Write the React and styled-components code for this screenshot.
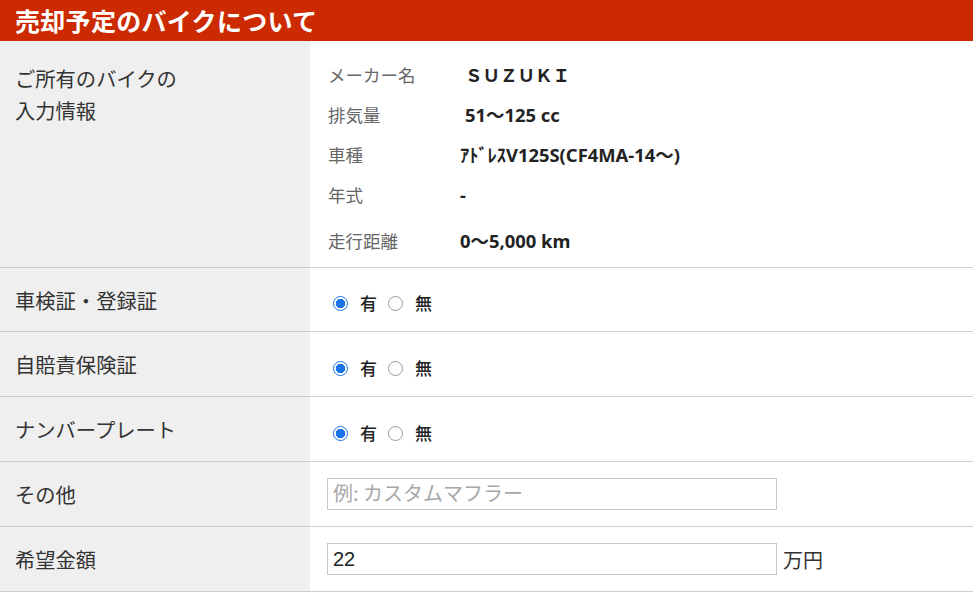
import React from "react";
import styled, { createGlobalStyle } from "styled-components";

const Global = createGlobalStyle`
  html, body { margin: 0; padding: 0; background: #fff; }
  body { font-family: "Noto Sans", "Noto Sans CJK JP", sans-serif; color: #333; }
  * { box-sizing: border-box; }
`;

const Page = styled.div`
  width: 973px;
`;

const Header = styled.h2`
  margin: 0;
  height: 41px;
  padding-left: 15px;
  background: #cc2a00;
  color: #fff;
  font-family: "Noto Sans CJK JP", sans-serif;
  font-size: 25px;
  font-weight: 700;
  line-height: 41px;
  letter-spacing: 0.3px;
`;

const Row = styled.div`
  display: grid;
  grid-template-columns: 310px 1fr;
  height: ${(p) => p.$h}px;
  border-bottom: 1px solid #cfcfcf;
`;

const Label = styled.div`
  background: #efefef;
  padding: ${(p) => (p.$top ? "21px 0 0 15px" : "0 0 0 15px")};
  display: flex;
  align-items: ${(p) => (p.$top ? "flex-start" : "center")};
  font-family: "Noto Sans CJK JP", sans-serif;
  font-size: 20.3px;
  line-height: 32px;
  color: #333;
`;

const Cell = styled.div`
  display: flex;
  align-items: center;
  padding-left: ${(p) => p.$pl ?? 18}px;
`;

const Specs = styled.div`
  padding: 13px 0 0 18px;
  display: flex;
  flex-direction: column;
`;

const Spec = styled.div`
  display: grid;
  grid-template-columns: 132px 1fr;
  align-items: center;
  height: ${(p) => p.$h || 40}px;
`;

const SpecKey = styled.span`
  font-family: "Noto Sans CJK JP", sans-serif;
  font-size: 17.5px;
  color: #666;
`;

const SpecVal = styled.span`
  font-family: "Noto Sans", "Noto Sans CJK JP", sans-serif;
  font-size: ${(p) => p.$fs || 18.4}px;
  font-weight: 700;
  color: #222;
  padding-left: ${(p) => p.$indent || 0}px;
`;

const RadioGroup = styled.div`
  display: flex;
  align-items: center;
  padding-left: 5px;
  padding-top: 6px;
`;

const RadioLabel = styled.label`
  display: flex;
  align-items: center;
  margin-right: 11px;
  font-family: "Noto Sans CJK JP", sans-serif;
  font-size: 17px;
  font-weight: 500;
  line-height: 17px;
  color: #222;
`;

const RadioInput = styled.input.attrs({ type: "radio" })`
  appearance: none;
  flex: none;
  width: 15px;
  height: 15px;
  margin: 2px 12px 0 0;
  border-radius: 50%;
  border: 1px solid #9a9a9a;
  background: #fff;
  &:checked {
    border: 1.5px solid #1a73e8;
    background: radial-gradient(circle, #1a73e8 0 4.5px, #fff 4.7px);
  }
`;

const TextInput = styled.input`
  width: 450px;
  height: 32px;
  border: 1px solid #c8c8c8;
  padding: 0 5px;
  font-family: "Liberation Sans", "Noto Sans CJK JP", sans-serif;
  font-size: 20px;
  color: #222;
  outline: none;
  &::placeholder {
    color: #a8a8a8;
    font-family: "Noto Sans CJK JP", sans-serif;
  }
`;

const Unit = styled.span`
  margin-left: 6px;
  font-family: "Noto Sans CJK JP", sans-serif;
  font-size: 20px;
  color: #333;
`;

const specs = [
  { k: "メーカー名", v: "ＳＵＺＵＫＩ", indent: 5, fs: 17.5 },
  { k: "排気量", v: "51～125 cc", indent: 5 },
  { k: "車種", v: "ｱﾄﾞﾚｽV125S(CF4MA-14～)" },
  { k: "年式", v: "-" },
  { k: "走行距離", v: "0～5,000 km", h: 52 },
];

function YesNo({ name }) {
  return (
    <RadioGroup>
      <RadioLabel>
        <RadioInput name={name} defaultChecked />
        有
      </RadioLabel>
      <RadioLabel>
        <RadioInput name={name} />
        無
      </RadioLabel>
    </RadioGroup>
  );
}

export default function App() {
  return (
    <Page>
      <Global />
      <Header>売却予定のバイクについて</Header>
      <Row $h={227}>
        <Label $top>
          ご所有のバイクの
          <br />
          入力情報
        </Label>
        <Specs>
          {specs.map((s) => (
            <Spec key={s.k} $h={s.h}>
              <SpecKey>{s.k}</SpecKey>
              <SpecVal $indent={s.indent} $fs={s.fs}>
                {s.v}
              </SpecVal>
            </Spec>
          ))}
        </Specs>
      </Row>
      <Row $h={64}>
        <Label>車検証・登録証</Label>
        <Cell>
          <YesNo name="shaken" />
        </Cell>
      </Row>
      <Row $h={65}>
        <Label>自賠責保険証</Label>
        <Cell>
          <YesNo name="jibaiseki" />
        </Cell>
      </Row>
      <Row $h={65}>
        <Label>ナンバープレート</Label>
        <Cell>
          <YesNo name="number" />
        </Cell>
      </Row>
      <Row $h={65}>
        <Label>その他</Label>
        <Cell $pl={17}>
          <TextInput placeholder="例: カスタムマフラー" />
        </Cell>
      </Row>
      <Row $h={65}>
        <Label>希望金額</Label>
        <Cell $pl={17}>
          <TextInput defaultValue="22" />
          <Unit>万円</Unit>
        </Cell>
      </Row>
    </Page>
  );
}
